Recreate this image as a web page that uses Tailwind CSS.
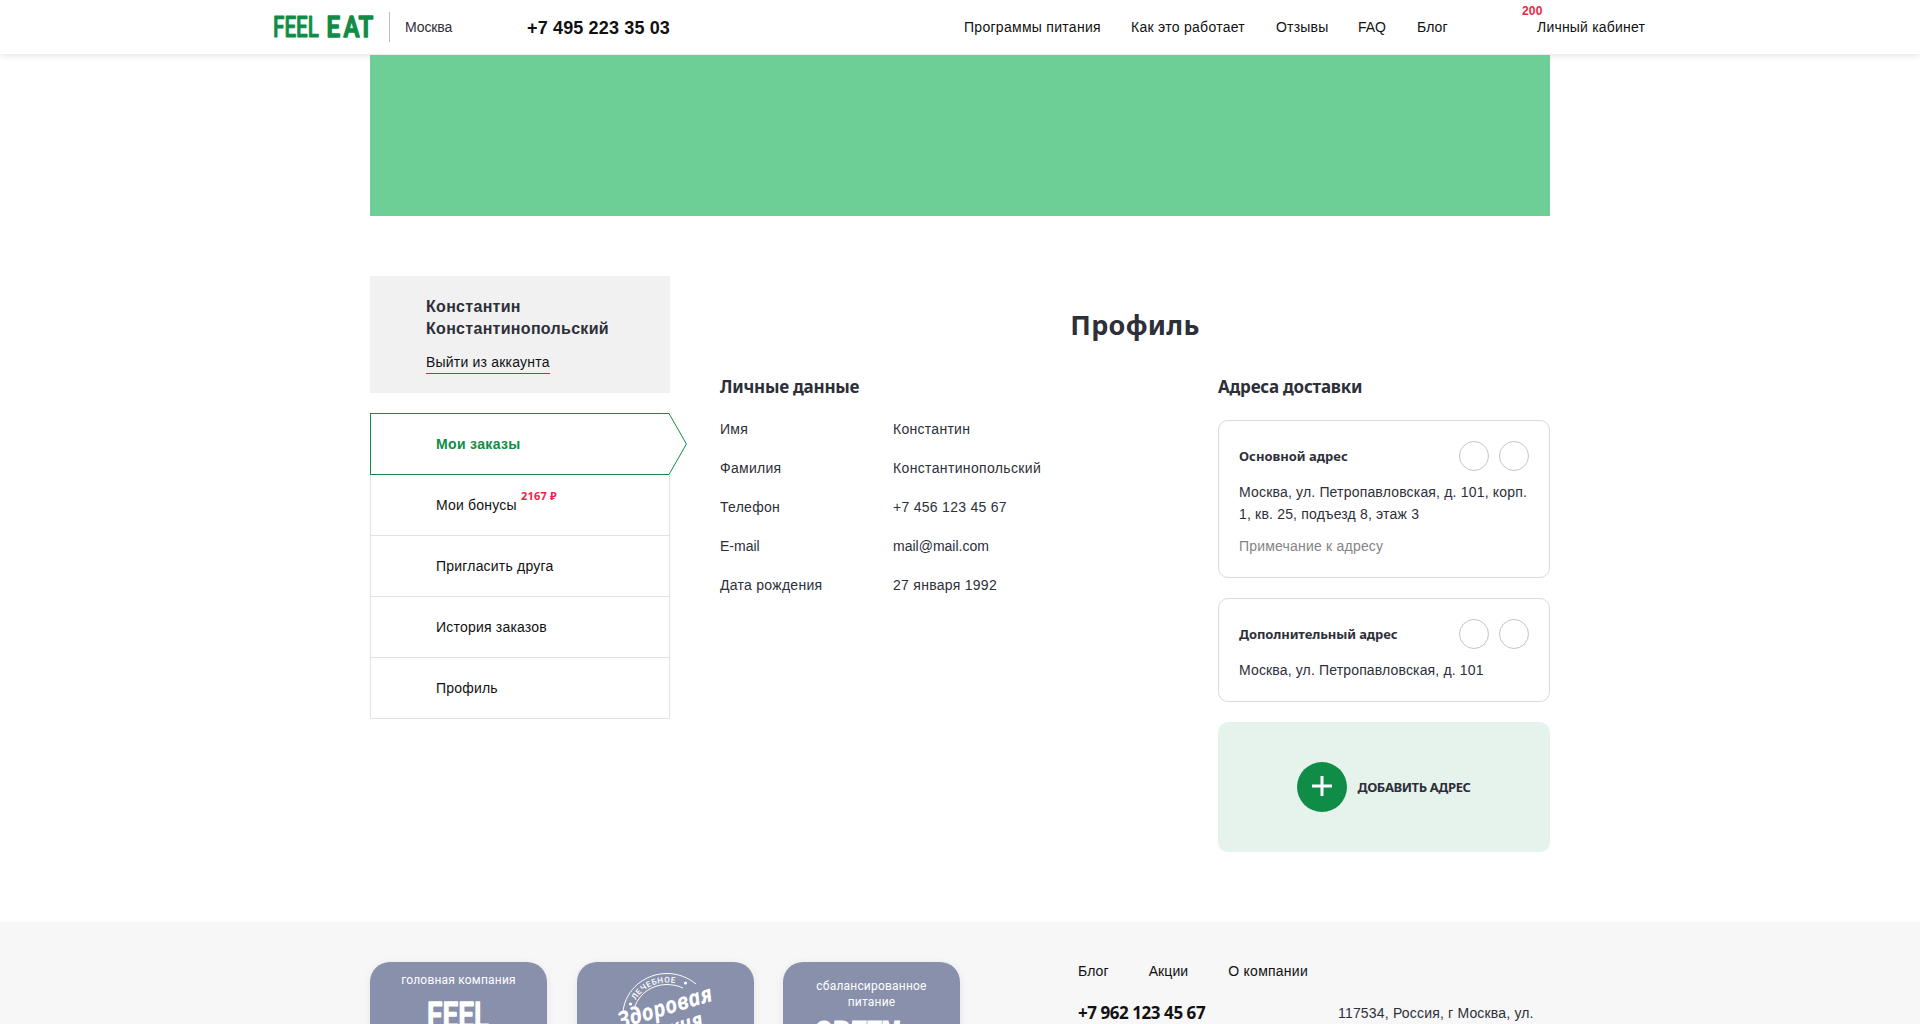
<!DOCTYPE html>
<html lang="ru">
<head>
<meta charset="utf-8">
<title>FEEL EAT — Профиль</title>
<script src="https://cdn.jsdelivr.net/npm/@tailwindcss/browser@4"></script>
</head>
<body class="h-screen overflow-hidden flex flex-col bg-white font-['Liberation_Sans',sans-serif] text-sm tracking-[0.28px] text-[#2d2f39]">

<header class="h-[54px] shrink-0 flex items-center pl-[273px] pr-[274px] bg-white shadow-[0_2px_6px_rgba(0,0,0,0.1)] text-[#111]">
  <svg class="w-[102px] h-[30px] shrink-0 overflow-visible tracking-normal" viewBox="0 0 102 30" fill="#0f8d46" stroke="#0f8d46" stroke-linejoin="round" font-family="Roboto, sans-serif" font-size="29">
    <text x="0" y="25.400" stroke-width="0.900" font-weight="500" textLength="46" lengthAdjust="spacingAndGlyphs">FEEL</text>
    <text y="25.400" stroke-width="1.600" font-weight="500" transform="translate(53.500 0) scale(0.830 1)" x="0 20.500 38.500">EAT</text>
  </svg>
  <div class="w-px h-[30px] ml-3.5 bg-[#bdbdbd]"></div>
  <span class="ml-[15px] w-[122px] text-[#2d2f39] tracking-[-0.1px]">Москва</span>
  <b class="text-lg leading-6 tracking-[0.15px] pt-px">+7 495 223 35 03</b>
  <nav class="ml-auto flex items-center">
    <a class="w-[167px]">Программы питания</a>
    <a class="w-[145px]">Как это работает</a>
    <a class="w-[82px] tracking-[0.2px]">Отзывы</a>
    <a class="w-[59px] tracking-normal">FAQ</a>
    <a class="w-[120px] tracking-[0.1px]">Блог</a>
    <a class="relative whitespace-nowrap w-[109px] tracking-[0.2px]">Личный кабинет<b class="absolute -left-[15px] -top-3 leading-3 text-xs text-[#f01f45]">200</b></a>
  </nav>
</header>

<div class="relative mt-px h-[161px] shrink-0 w-[1180px] mx-auto bg-[#6dcf96]"></div>

<main class="w-[1180px] h-[706px] shrink-0 mx-auto pt-[60px] flex">
  <aside class="w-[300px]">
    <div class="h-[117px] bg-[#f1f1f1] pl-14 pt-5">
      <div class="text-base leading-[22px] font-bold tracking-[0.3px]">Константин<br>Константинопольский</div>
      <a class="inline-block mt-3 h-[22px] leading-[21px] border-b border-[#0f8d46] text-[#111] tracking-[0.2px]">Выйти из аккаунта</a>
    </div>
    <nav class="mt-5 text-[#111]">
      <a class="relative flex items-center h-[62px] pl-[65px] border border-[#0f8d46] text-[#0f8d46] font-bold tracking-[0.35px]">Мои заказы
        <svg class="absolute -right-[18px] -top-px w-[18px] h-[62px]" viewBox="0 0 18 62"><path d="M0 0H0.500L17.500 31L0.500 62H0Z" fill="#fff"/><path d="M0 0.500L17.400 31L0 61.500" fill="none" stroke="#0f8d46"/></svg>
      </a>
      <div class="border-x border-[#e2e2e2] tracking-[0.2px]">
        <a class="flex items-center h-[61px] pl-[65px] border-b border-[#e2e2e2]"><span class="relative">Мои бонусы<b class="absolute left-[85px] -top-[7px] whitespace-nowrap font-['Noto_Sans',sans-serif] text-[11px] leading-4 tracking-[0.2px] text-[#f01f45]">2167 ₽</b></span></a>
        <a class="flex items-center h-[61px] pl-[65px] border-b border-[#e2e2e2]">Пригласить друга</a>
        <a class="flex items-center h-[61px] pl-[65px] border-b border-[#e2e2e2]">История заказов</a>
        <a class="flex items-center h-[61px] pl-[65px] border-b border-[#e2e2e2]">Профиль</a>
      </div>
    </nav>
  </aside>

  <section class="ml-[50px] w-[830px] pt-[29px]">
    <h1 class="text-center font-['Noto_Sans',sans-serif] font-bold text-[27px] leading-10 tracking-[0.3px]">Профиль</h1>
    <div class="flex justify-between mt-[30px]">
      <div>
        <h2 class="font-['Noto_Sans',sans-serif] font-bold text-[17px] leading-6 tracking-[-0.25px]">Личные данные</h2>
        <dl class="mt-2.5 grid grid-cols-[173px_200px] auto-rows-[39px] items-center">
          <dt>Имя</dt><dd>Константин</dd>
          <dt>Фамилия</dt><dd class="tracking-[0.35px]">Константинопольский</dd>
          <dt>Телефон</dt><dd>+7 456 123 45 67</dd>
          <dt class="tracking-normal">E-mail</dt><dd class="tracking-normal">mail@mail.com</dd>
          <dt>Дата рождения</dt><dd>27 января 1992</dd>
        </dl>
      </div>
      <div class="w-[332px]">
        <h2 class="font-['Noto_Sans',sans-serif] font-bold text-[17px] leading-6 tracking-[-0.25px]">Адреса доставки</h2>
        <div class="mt-[21px] h-[158px] rounded-[10px] border border-[#dadada] p-5">
          <div class="flex items-center gap-2.5 h-[30px]">
            <h3 class="grow font-['Noto_Sans',sans-serif] font-bold text-[13px] tracking-normal">Основной адрес</h3>
            <i class="size-[30px] rounded-full border border-[#c4c4c4]"></i><i class="size-[30px] rounded-full border border-[#c4c4c4]"></i>
          </div>
          <p class="mt-2.5 leading-[22px] tracking-[0.18px] whitespace-nowrap">Москва, ул. Петропавловская, д. 101, корп.<br>1, кв. 25, подъезд 8, этаж 3</p>
          <p class="mt-2.5 leading-[22px] tracking-[0.2px] text-[#848484]">Примечание к адресу</p>
        </div>
        <div class="mt-5 h-[104px] rounded-[10px] border border-[#dadada] p-5">
          <div class="flex items-center gap-2.5 h-[30px]">
            <h3 class="grow font-['Noto_Sans',sans-serif] font-bold text-[13px] tracking-[-0.1px]">Дополнительный адрес</h3>
            <i class="size-[30px] rounded-full border border-[#c4c4c4]"></i><i class="size-[30px] rounded-full border border-[#c4c4c4]"></i>
          </div>
          <p class="mt-2.5 leading-[22px] tracking-[0.15px]">Москва, ул. Петропавловская, д. 101</p>
        </div>
        <button class="mt-5 h-[130px] w-full rounded-[10px] bg-[#e6f3ec] flex items-center justify-center gap-2.5">
          <span class="size-[50px] rounded-full bg-[#0f8d46] flex items-center justify-center">
            <svg class="size-5 -mt-0.5" viewBox="0 0 20 20"><path d="M10 0V20M0 10H20" stroke="#fff" stroke-width="3"/></svg>
          </span>
          <span class="font-['Noto_Sans',sans-serif] font-bold text-[13px] tracking-[-0.4px]">ДОБАВИТЬ АДРЕС</span>
        </button>
      </div>
    </div>
  </section>
</main>

<footer class="grow min-h-0 overflow-hidden bg-[#f7f7f7]">
  <div class="w-[1180px] mx-auto pt-10 flex">
    <div class="flex gap-[29.5px] font-['Roboto',sans-serif] text-xs tracking-[0.2px] text-white text-center">
      <div class="w-[177px] h-[177px] rounded-[20px] bg-[#8890ac] shadow-[0_2px_10px_rgba(0,0,0,0.08)] pt-2.5">
        <div class="leading-4">головная компания</div>
        <svg class="mx-auto mt-2 w-[66px] h-[60px] tracking-normal" viewBox="0 0 66 60"><text x="1" y="31.500" fill="#fff" stroke="#fff" stroke-width="1.600" stroke-linejoin="round" font-size="37" font-weight="500" font-family="Roboto, sans-serif" textLength="62" lengthAdjust="spacingAndGlyphs">FEEL</text></svg>
      </div>
      <div class="w-[177px] h-[177px] rounded-[20px] bg-[#8890ac] shadow-[0_2px_10px_rgba(0,0,0,0.08)]">
        <svg class="w-[177px] h-[100px] tracking-normal" viewBox="0 0 177 100" fill="none" stroke="#fff">
          <path d="M46 49C49 27 68 11.500 90 11.500C101 11.500 111 15.500 119 22"/>
          <path d="M58 44C63 31 75 23 89 22.500C95 22.500 101 23.500 106 26"/>
          <path id="arc" d="M58.500 38.500C65 27 76 21 90 20.500C95 20.500 99 20.800 106 23" stroke="none"/>
          <g fill="#fff" stroke="none">
            <circle cx="53.500" cy="42" r="1.600"/>
            <circle cx="108.500" cy="21" r="1.600"/>
            <text font-family="Roboto, sans-serif" font-size="8" font-weight="500" letter-spacing="0.700"><textPath href="#arc">ЛЕЧЕБНОЕ</textPath></text>
            <g font-family="'Open Sans', sans-serif" font-style="italic" font-weight="700">
              <text transform="translate(43 67) rotate(-17)" font-size="23" textLength="98" lengthAdjust="spacingAndGlyphs">Здоровая</text>
              <text transform="translate(74 81) rotate(-17)" font-size="23" textLength="56" lengthAdjust="spacingAndGlyphs">кухня</text>
            </g>
          </g>
        </svg>
      </div>
      <div class="w-[177px] h-[177px] rounded-[20px] bg-[#8890ac] shadow-[0_2px_10px_rgba(0,0,0,0.08)] pt-4">
        <div class="leading-4">сбалансированное<br>питание</div>
        <svg class="ml-[30px] mt-2 w-[100px] h-[40px] tracking-normal" viewBox="0 0 100 40"><text x="0" y="27" fill="#fff" stroke="#fff" stroke-width="1.200" font-size="33" font-weight="900" font-style="italic" font-family="Roboto, sans-serif" textLength="86" lengthAdjust="spacingAndGlyphs">GREEN</text></svg>
      </div>
    </div>
    <div class="ml-[118px] -mt-px">
      <nav class="flex gap-10 leading-5 text-[#111] tracking-[0.1px]"><a>Блог</a><a>Акции</a><a class="tracking-[0.25px]">О компании</a></nav>
      <div class="flex mt-[21px] leading-[22px]">
        <b class="w-[260px] text-[#111] font-['Noto_Sans',sans-serif] text-[17px] tracking-[-0.45px]">+7 962 123 45 67</b>
        <span class="w-[212px] tracking-[0.18px]">117534, Россия, г Москва, ул.</span>
      </div>
    </div>
  </div>
</footer>
</body>
</html>
